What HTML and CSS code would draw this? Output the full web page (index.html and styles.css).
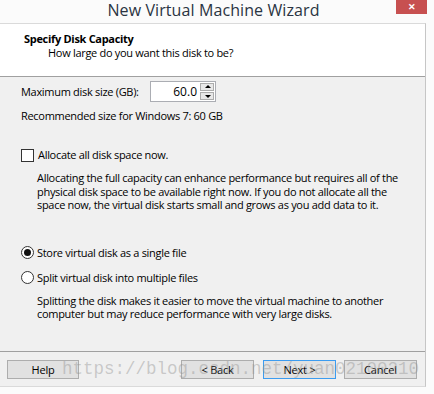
FILE: index.html
```html
<!DOCTYPE html>
<html lang="en">
<head>
    <meta charset="UTF-8">
    <title>New Virtual Machine Wizard</title>
    <link rel="stylesheet" href="styles.css">
</head>
<body>
    <div class="window">
        <div class="titlebar">
            <span class="title">New Virtual Machine Wizard</span>
            <span class="close">&#x2715;</span>
        </div>

        <div class="dialog">
            <div class="header">
                <h1>Specify Disk Capacity</h1>
                <p>How large do you want this disk to be?</p>
            </div>

            <div class="body">
                <div class="size-row">
                    <label>Maximum disk size (GB):</label>
                    <div class="spinbox">
                        <span class="spin-value">60.0</span>
                        <div class="spin-buttons">
                            <span class="spin-btn up"></span>
                            <span class="spin-btn down"></span>
                        </div>
                    </div>
                </div>
                <p class="recommend">Recommended size for Windows 7: 60 GB</p>

                <div class="option check-option">
                    <span class="checkbox"></span>
                    <span>Allocate all disk space now.</span>
                </div>
                <p class="note">Allocating the full capacity can enhance performance but requires all of the<br>
                    physical disk space to be available right now. If you do not allocate all the<br>
                    space now, the virtual disk starts small and grows as you add data to it.</p>

                <div class="option radio-first">
                    <span class="radio checked"></span>
                    <span>Store virtual disk as a single file</span>
                </div>
                <div class="option radio-second">
                    <span class="radio"></span>
                    <span>Split virtual disk into multiple files</span>
                </div>
                <p class="note">Splitting the disk makes it easier to move the virtual machine to another<br>
                    computer but may reduce performance with very large disks.</p>
            </div>

            <div class="buttons">
                <button class="btn">Help</button>
                <button class="btn back">&lt; Back</button>
                <button class="btn default">Next &gt;</button>
                <button class="btn">Cancel</button>
                <span class="watermark">https://blog.csdn.net/yuan02100210</span>
            </div>
        </div>
    </div>
</body>
</html>
```

FILE: styles.css
```css
body {
    margin: 0;
    background: #fbfbfb;
    font-family: 'Open Sans', 'Noto Sans', sans-serif;
    font-size: 11px;
    letter-spacing: -0.3px;
    color: #000;
}

.window {
    width: 427px;
    height: 394px;
    background: #fbfbfb;
}

.titlebar {
    display: grid;
    grid-template-columns: 1fr auto 1fr;
    height: 23px;
    align-items: start;
}

.title {
    grid-column: 2;
    font-size: 16px;
    line-height: 20px;
    letter-spacing: 0.1px;
    color: #2a3442;
}

.close {
    grid-column: 3;
    justify-self: end;
    width: 31px;
    height: 14px;
    background: #c75050;
    color: #fff;
    font-size: 9px;
    line-height: 14px;
    text-align: center;
    font-weight: bold;
}

.dialog {
    width: 426px;
    border-top: 1px solid #dadada;
    border-right: 1px solid #c6c6c6;
    border-bottom: 1px solid #dadada;
    background: #f0f0f0;
    box-sizing: border-box;
}

.header {
    background: #fff;
    height: 53px;
    border-bottom: 1px solid #a0a0a0;
    padding: 7px 0 0 24px;
    box-sizing: border-box;
}

.header h1 {
    margin: 0;
    font-size: 11px;
    font-weight: bold;
    line-height: 15px;
}

.header p {
    margin: 0 0 0 24px;
    line-height: 14px;
}

.body {
    padding: 4px 0 0 21px;
    height: 275px;
    box-sizing: border-box;
    border-bottom: 1px solid #a0a0a0;
}

.size-row {
    display: flex;
    align-items: center;
    height: 21px;
}

.size-row label {
    width: 129px;
}

.spinbox {
    display: flex;
    align-items: center;
    width: 66px;
    height: 21px;
    border: 1px solid #abadb3;
    background: #fff;
    box-sizing: border-box;
}

.spin-value {
    flex: 1;
    text-align: right;
    font-size: 12px;
    letter-spacing: 0;
    padding-right: 3px;
}

.spin-buttons {
    display: flex;
    flex-direction: column;
    gap: 1px;
    margin-right: 1px;
}

.spin-btn {
    width: 14px;
    height: 8px;
    border: 1px solid #acacac;
    background: #e8e8e8;
    box-sizing: border-box;
    position: relative;
}

.spin-btn::after {
    content: '';
    position: absolute;
    left: 4px;
    border-left: 3px solid transparent;
    border-right: 3px solid transparent;
}

.spin-btn.up::after {
    top: 1px;
    border-bottom: 3px solid #000;
}

.spin-btn.down::after {
    top: 2px;
    border-top: 3px solid #000;
}

.recommend {
    margin: 7px 0 0;
    line-height: 14px;
}

.option {
    display: flex;
    align-items: center;
    gap: 4px;
    line-height: 14px;
}

.check-option {
    margin-top: 25px;
}

.radio-first {
    margin-top: 34px;
}

.radio-second {
    margin-top: 11px;
}

.checkbox {
    width: 13px;
    height: 13px;
    border: 1px solid #333;
    background: #fff;
    box-sizing: border-box;
}

.radio {
    width: 13px;
    height: 13px;
    border: 1px solid #333;
    border-radius: 50%;
    background: #fff;
    box-sizing: border-box;
    display: flex;
    align-items: center;
    justify-content: center;
    margin-right: -1px;
}

.radio.checked::after {
    content: '';
    width: 7px;
    height: 7px;
    border-radius: 50%;
    background: #111;
}

.note {
    margin: 9px 0 0 16px;
    white-space: nowrap;
    line-height: 13.5px;
}

.buttons {
    display: flex;
    padding: 8px 8px 7px 7px;
    position: relative;
}

.btn {
    width: 73px;
    height: 19px;
    padding: 0;
    font-family: inherit;
    font-size: 11px;
    letter-spacing: -0.2px;
    color: #000;
    background: #e1e1e1;
    border: 1px solid #adadad;
    margin-left: 8px;
}

.btn:first-child {
    margin-left: 0;
    width: 72px;
}

.btn.back {
    margin-left: auto;
}

.btn.default {
    border-color: #3c9cf0;
    margin-left: 9px;
}

.watermark {
    position: absolute;
    left: 62px;
    top: 4px;
    font-family: 'Liberation Mono', monospace;
    font-size: 17.5px;
    letter-spacing: 0;
    line-height: 26px;
    color: rgba(150, 150, 150, 0.45);
    pointer-events: none;
}
```
